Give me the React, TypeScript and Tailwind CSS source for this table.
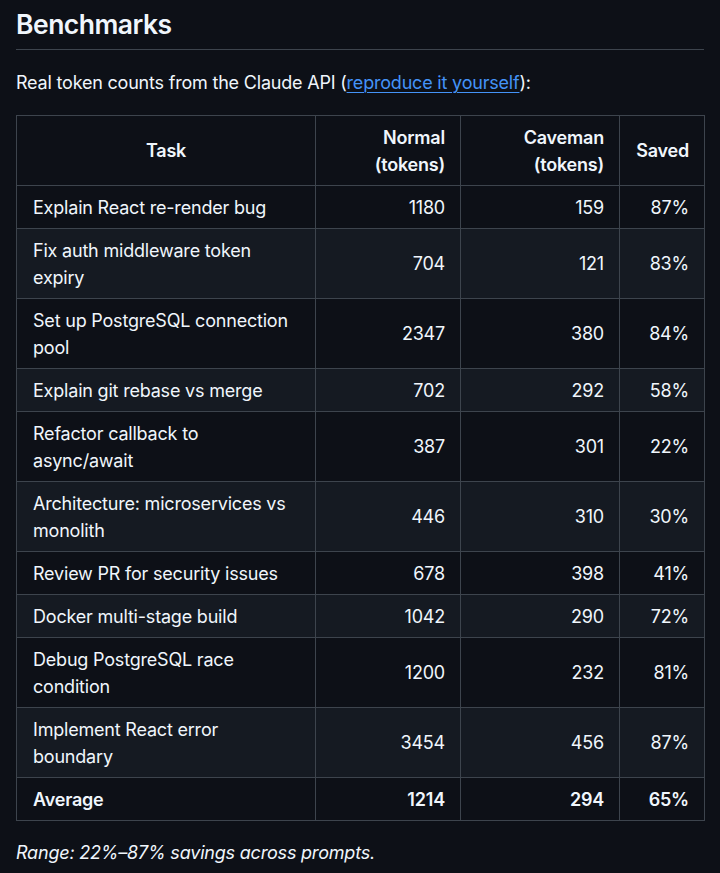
import React from "react";

const rows: [string, string, string, string][] = [
  ["Explain React re-render bug", "1180", "159", "87%"],
  ["Fix auth middleware token expiry", "704", "121", "83%"],
  ["Set up PostgreSQL connection pool", "2347", "380", "84%"],
  ["Explain git rebase vs merge", "702", "292", "58%"],
  ["Refactor callback to async/await", "387", "301", "22%"],
  ["Architecture: microservices vs monolith", "446", "310", "30%"],
  ["Review PR for security issues", "678", "398", "41%"],
  ["Docker multi-stage build", "1042", "290", "72%"],
  ["Debug PostgreSQL race condition", "1200", "232", "81%"],
  ["Implement React error boundary", "3454", "456", "87%"],
];

const cell = "border border-[#3d444d] py-[7.5px]";

export default function App() {
  return (
    <div
      className="min-h-[873px] w-[720px] bg-[#0d1017] text-[#f0f6fc] px-4"
      style={{ fontFamily: "Inter, 'Noto Sans', sans-serif" }}
    >
      <h2 className="pt-[7px] pb-[8px] text-[26.5px] leading-[34px] font-semibold tracking-[-0.5px] border-b border-[#3d444d]">
        Benchmarks
      </h2>
      <p className="mt-[19px] text-[18px] leading-[28px] tracking-[-0.2px]">
        Real token counts from the Claude API (
        <span className="text-[#4493f8] underline underline-offset-[3px] decoration-[1px]">reproduce it yourself</span>
        ):
      </p>
      <table className="mt-[18px] border-collapse table-fixed w-[688px] text-[18px] leading-[27px] tracking-[-0.2px]">
        <colgroup>
          <col className="w-[299px]" />
          <col className="w-[145px]" />
          <col className="w-[159px]" />
          <col className="w-[85px]" />
        </colgroup>
        <thead>
          <tr className="bg-[#0d1017]">
            <th className={`${cell} px-4 text-center font-semibold`}>Task</th>
            <th className={`${cell} px-[15px] text-right font-semibold`}>Normal (tokens)</th>
            <th className={`${cell} px-[15px] text-right font-semibold`}>Caveman (tokens)</th>
            <th className={`${cell} px-[15px] text-right font-semibold`}>Saved</th>
          </tr>
        </thead>
        <tbody>
          {rows.map((r, i) => (
            <tr key={i} className={i % 2 === 1 ? "bg-[#151a22]" : "bg-[#0d1017]"}>
              <td className={`${cell} px-4`}>{r[0]}</td>
              <td className={`${cell} px-[15px] text-right`}>{r[1]}</td>
              <td className={`${cell} px-[15px] text-right`}>{r[2]}</td>
              <td className={`${cell} px-[15px] text-right`}>{r[3]}</td>
            </tr>
          ))}
          <tr className="bg-[#0d1017] font-semibold">
            <td className={`${cell} px-4`}>Average</td>
            <td className={`${cell} px-[15px] text-right`}>1214</td>
            <td className={`${cell} px-[15px] text-right`}>294</td>
            <td className={`${cell} px-[15px] text-right`}>65%</td>
          </tr>
        </tbody>
      </table>
      <p className="mt-[18px] text-[18px] leading-[28px] italic tracking-[-0.2px]">Range: 22%–87% savings across prompts.</p>
    </div>
  );
}
